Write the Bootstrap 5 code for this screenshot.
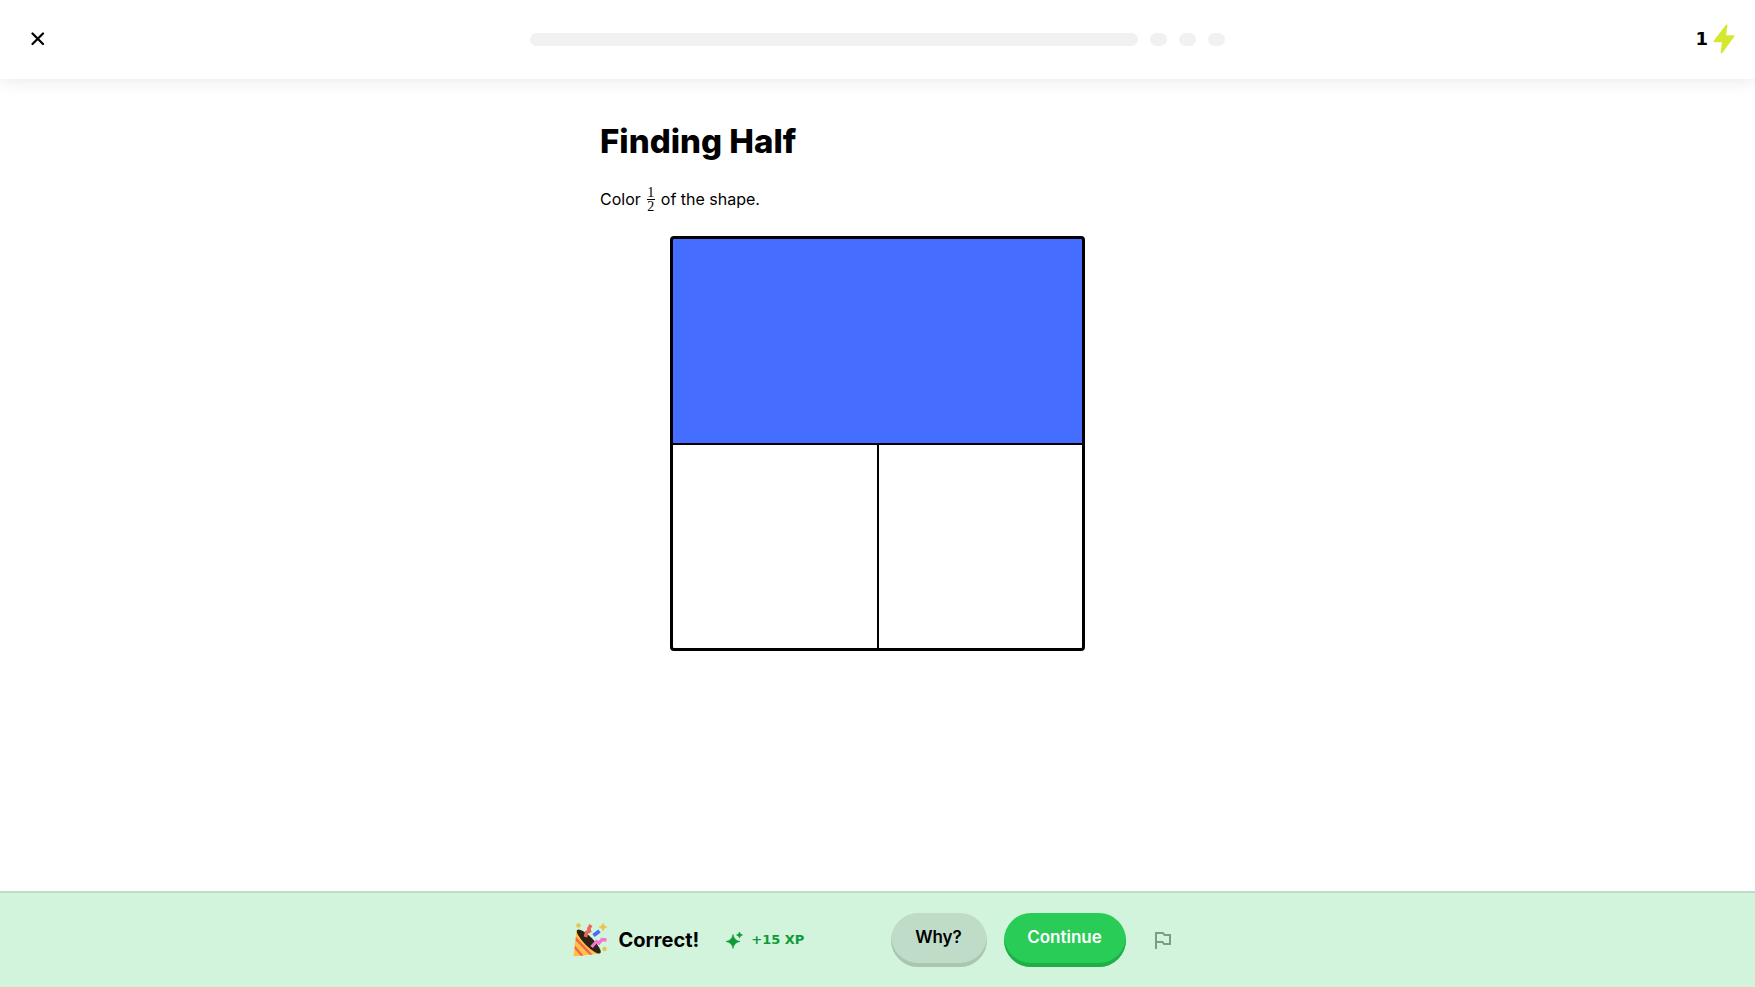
<!DOCTYPE html>
<html lang="en">
<head>
<meta charset="utf-8">
<meta name="viewport" content="width=device-width, initial-scale=1">
<title>Finding Half</title>
<link rel="stylesheet" href="https://cdn.jsdelivr.net/npm/bootstrap@5.3.0/dist/css/bootstrap.min.css">
<style>
body { font-family: Inter, "Liberation Sans", sans-serif; color: #000; background: #fff; }
.lesson-header { height: 79px; padding: 0 20px 1px; box-shadow: 0 2px 16px rgba(0,0,0,.09); }
.side { flex: 1 1 0; }
.icon-btn { width: 36px; height: 36px; padding: 0; border: 0; display: flex; align-items: center; justify-content: center; }
.actions .icon-btn { width: 40px; }
.steps { width: 695px; gap: 12px; }
.step-bar, .step-dot { height: 13px; border-radius: 8px; background: #f1f1f1; }
.step-dot { width: 17px; }
.energy { font: 700 18px/24px "DejaVu Sans", sans-serif; gap: 5px; }
.lesson { max-width: 555px; padding-top: 42px; }
.lesson h1 { font-size: 33px; line-height: 40px; font-weight: 800; margin-bottom: 24px; }
.prompt { font-size: 16px; line-height: 28px; height: 28px; margin-bottom: 23px; gap: 6px; }
.frac { font: 14px/13px "Liberation Serif", serif; width: 8px; text-align: center; }
.frac span { display: block; }
.frac span + span { border-top: 1px solid #000; }
.shape { width: 415px; max-width: 100%; aspect-ratio: 1; border: 3px solid #000; border-radius: 4px; background: #000; display: grid; grid-template: 1fr 1fr / 1fr 1fr; gap: 2px; overflow: hidden; }
.shape button { border: 0; padding: 0; background: #fff; }
.shape .filled { grid-column: span 2; background: #456dff; }
.result { background: #d2f4dc; border-top: 2px solid #bfdcc8; height: 96px; }
.result-row { width: 610px; }
.verdict { font-size: 20px; line-height: 28px; font-weight: 700; margin-left: 12px; }
.xp { color: #0f9a38; font: 700 13px/20px "DejaVu Sans", sans-serif; margin-left: 27px; gap: 8px; }
.pill { height: 54px; padding: 0 0 5px; border: 0; border-radius: 27px; font-size: 17px; font-weight: 600; }
.pill-why, .pill-why:hover { width: 96px; background: #bfdcc8; color: #000; box-shadow: inset 0 -4px #abc5b3; }
.pill-go, .pill-go:hover { width: 122px; background: #29cc57; color: #fff; box-shadow: inset 0 -4px #1fb045; }
.actions { gap: 17px; }
</style>
</head>
<body class="d-flex flex-column min-vh-100">
<header class="lesson-header d-flex align-items-center">
  <div class="side d-flex">
    <button class="btn icon-btn" type="button" aria-label="Close">
      <svg width="14" height="14" viewBox="0 0 14 14" fill="none" stroke="#000" stroke-width="2.2" stroke-linecap="round"><path d="M1.500 1.500l10.500 10.500M12 1.500l-10.500 10.500"/></svg>
    </button>
  </div>
  <div class="steps d-flex align-items-center">
    <div class="step-bar flex-grow-1"></div>
    <div class="step-dot"></div>
    <div class="step-dot"></div>
    <div class="step-dot"></div>
  </div>
  <div class="side energy d-flex align-items-center justify-content-end">
    <span>1</span>
    <svg width="22" height="30" viewBox="0 0 22 30" fill="#d4e830"><path d="M13.200.5Q14.600.200 14.500 1.700L13 11.300H20.600Q22 11.500 21.200 12.800L9.500 28.800Q8 30.400 7.700 28.500L9 18.200H1.500Q.1 17.800.9 16.500Z"/></svg>
  </div>
</header>
<main class="lesson container-fluid px-0 mx-auto w-100 flex-grow-1">
  <h1>Finding Half</h1>
  <div class="prompt d-flex align-items-center">
    <span>Color</span>
    <span class="frac"><span>1</span><span>2</span></span>
    <span>of the shape.</span>
  </div>
  <div class="shape mx-auto">
    <button class="filled" type="button" aria-label="Top half"></button>
    <button type="button" aria-label="Bottom left quarter"></button>
    <button type="button" aria-label="Bottom right quarter"></button>
  </div>
</main>
<footer class="result d-flex align-items-center justify-content-center">
  <div class="result-row d-flex align-items-center">
    <svg width="34" height="34" viewBox="0 0 34 34">
      <path d="M3.500 7L.5 32.500Q.500 33.500 2 33.300L27.500 30.500Z" fill="#ffc247"/>
      <path d="M3 14L19.500 31.400L16.500 31.800L2.600 17.500Z M2 22.500L10.500 32.400L7.500 32.700L1.700 25.800Z" fill="#f2654f"/>
      <ellipse cx="15.800" cy="18.500" rx="16.300" ry="4.500" transform="rotate(45 15.800 18.500)" fill="#2c2112"/>
      <path d="M12.500 14L13.500 9.500L16.500 8L15.800 5.500L18 2" fill="none" stroke="#ef6659" stroke-width="3.500"/>
      <path d="M20.500 12.500L26.500 8" stroke="#456dff" stroke-width="4"/>
      <path d="M18.500 24L23.500 18.500L26 20L29 16.500L33.500 17" fill="none" stroke="#f276d5" stroke-width="3.300"/>
      <path d="M30 0L31.300 2.700L34 4L31.300 5.300L30 8L28.700 5.300L26 4L28.700 2.700Z" fill="#eec34b" stroke="#eec34b" stroke-width=".6"/>
      <circle cx="5.500" cy="2.500" r="2.200" fill="#e5c64c"/><circle cx="31.500" cy="26" r="2.200" fill="#e5c64c"/>
    </svg>
    <div class="verdict">Correct!</div>
    <div class="xp d-flex align-items-center">
      <svg width="17" height="17" viewBox="0 0 17 17" fill="#0f9a38" stroke="#0f9a38" stroke-width=".6" stroke-linejoin="round"><path d="M7 2.500Q8 8.500 14 9.500Q8 10.500 7 16.500Q6 10.500 0 9.500Q6 8.500 7 2.500Z M13.500 0Q13.900 2.600 16.500 3Q13.900 3.400 13.500 6Q13.100 3.400 10.500 3Q13.100 2.600 13.500 0Z"/></svg>
      <span>+15 XP</span>
    </div>
    <div class="actions d-flex align-items-center ms-auto">
      <button class="btn pill pill-why" type="button">Why?</button>
      <button class="btn pill pill-go" type="button">Continue</button>
      <button class="btn icon-btn" type="button" aria-label="Report a problem">
        <svg width="17" height="18" viewBox="0 0 17 18" fill="none" stroke="#7f9a87" stroke-width="2"><path d="M2 18V2H9L10.500 4H16V13H10L8.500 11H2"/></svg>
      </button>
    </div>
  </div>
</footer>
<script src="https://cdn.jsdelivr.net/npm/bootstrap@5.3.0/dist/js/bootstrap.bundle.min.js"></script>
</body>
</html>
